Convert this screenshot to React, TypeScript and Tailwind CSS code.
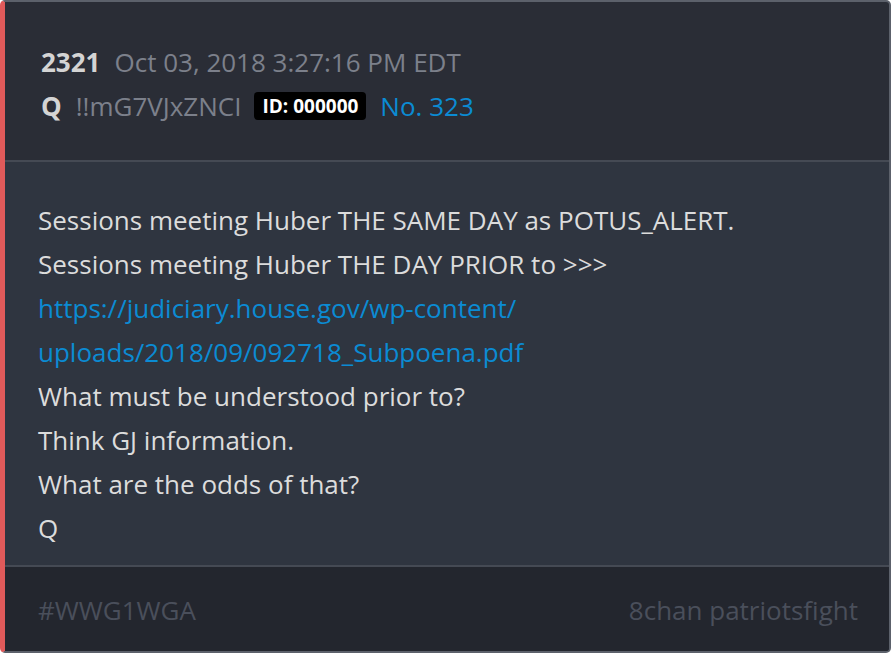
import React from "react";

const lines: { text: string; link?: boolean }[] = [
  { text: "Sessions meeting Huber THE SAME DAY as POTUS_ALERT." },
  { text: "Sessions meeting Huber THE DAY PRIOR to >>>" },
  { text: "https://judiciary.house.gov/wp-content/", link: true },
  { text: "uploads/2018/09/092718_Subpoena.pdf", link: true },
  { text: "What must be understood prior to?" },
  { text: "Think GJ information." },
  { text: "What are the odds of that?" },
  { text: "Q" },
];

export default function App() {
  return (
    <div className="w-[894px] h-[654px] bg-white font-['Open_Sans',sans-serif]">
      <div className="w-[891px] h-[653px] flex flex-col overflow-hidden rounded-[5px] border-2 border-l-[5px] border-[#5c616b] border-l-[#e05a5a] bg-[#2a2d36]">
        {/* header */}
        <div className="pt-[38px] pb-[32px] pl-[36px] text-[26px] leading-[44px]">
          <div className="flex items-center">
            <span className="font-bold text-[#d4d4d4]">2321</span>
            <span className="ml-[14px] text-[#7c808b]">
              Oct 03, 2018 3:27:16 PM EDT
            </span>
          </div>
          <div className="flex items-center">
            <span className="font-bold text-[#d4d4d4]">Q</span>
            <span className="ml-[14px] text-[#7c808b]">!!mG7VJxZNCI</span>
            <span className="ml-[13px] rounded-[4px] bg-black px-[8px] text-[19px] font-bold leading-[28px] text-white">
              ID: 000000
            </span>
            <span className="ml-[14px] text-[#0b8bd3]">No. 323</span>
          </div>
        </div>
        <div className="h-[2px] bg-[#454a54]" />
        {/* body */}
        <div className="flex-1 bg-[#2f3540] pt-[36px] pl-[33px] text-[26px] leading-[44px] text-[#dcdcdc]">
          {lines.map((l, i) =>
            l.link ? (
              <div key={i} className="text-[#0b8bd3]">
                {l.text}
              </div>
            ) : (
              <div key={i}>{l.text}</div>
            )
          )}
        </div>
        <div className="h-[2px] bg-[#454a54]" />
        {/* footer */}
        <div className="h-[84px] flex items-center justify-between bg-[#23262e] pt-[2px] pl-[33px] pr-[31px] text-[26px] text-[#4a4f5b]">
          <span>#WWG1WGA</span>
          <span>8chan patriotsfight</span>
        </div>
      </div>
    </div>
  );
}
